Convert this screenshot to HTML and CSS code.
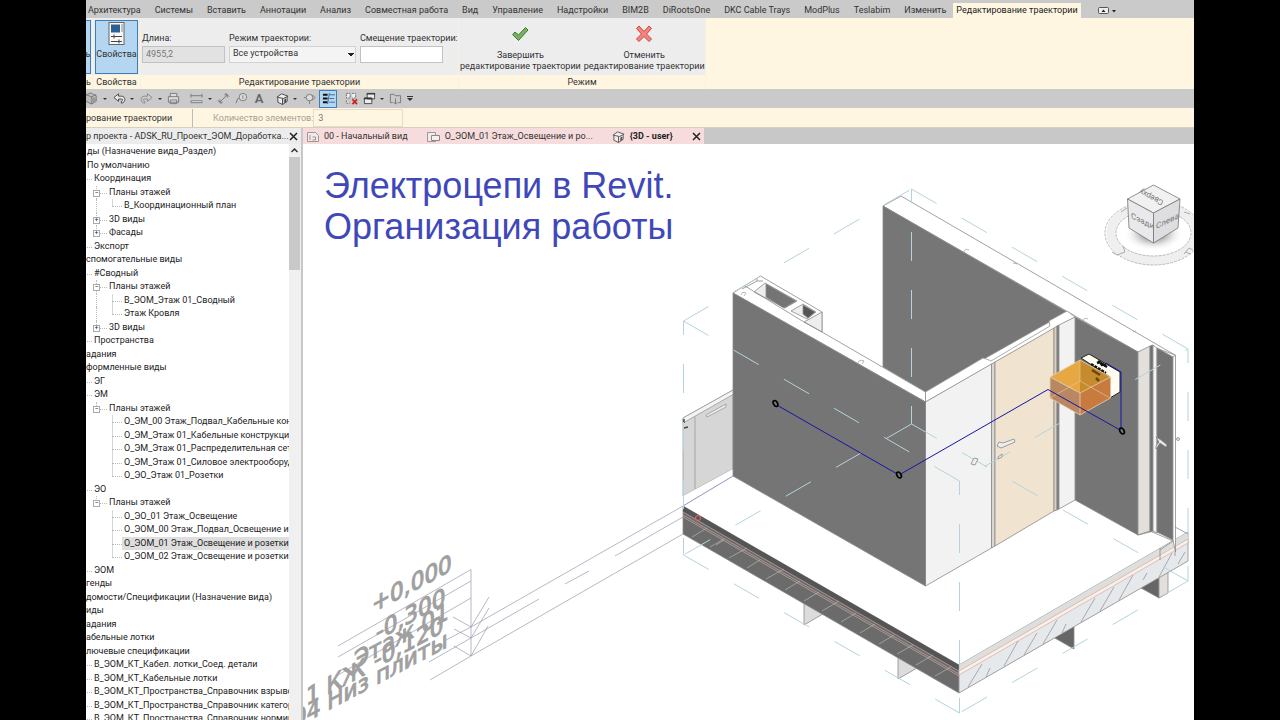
FILE: index.html
```html
<!DOCTYPE html>
<html lang="ru">
<head>
<meta charset="utf-8">
<title>Электроцепи в Revit</title>
<link rel="stylesheet" href="styles.css">
</head>
<body>
<div class="app">
  <nav class="menu">
    <button>Архитектура</button><button>Системы</button><button>Вставить</button><button>Аннотации</button><button>Анализ</button><button>Совместная работа</button><button>Вид</button><button>Управление</button><button>Надстройки</button><button>BIM2B</button><button>DiRootsOne</button><button>DKC Cable Trays</button><button>ModPlus</button><button>Teslabim</button><button>Изменить</button><button class="current">Редактирование траектории</button>
    <button class="collapse" aria-label="Свернуть ленту"><svg width="18" height="8" viewBox="0 0 18 8"><rect x=".5" y=".5" width="10" height="6" rx="1" fill="#eee" stroke="#555"/><path d="M3.500 5l2-2.500 2 2.500zM14 3h4l-2 2.500z" fill="#222"/></svg></button>
  </nav>

  <section class="ribbon">
    <div class="panel cut">
      <div class="panel-body"><button class="big on">ь</button></div>
      <div class="panel-title">ь</div>
    </div>
    <div class="panel props">
      <div class="panel-body">
        <button class="big on">
          <svg width="18" height="24" viewBox="0 0 18 24"><rect x="1" y=".5" width="15" height="22" fill="#f8f8f8" stroke="#666"/><rect x="3" y="2.500" width="9" height="8" fill="#2c5f94"/><path d="M13 3h2M13 5h2M13 7h2M13 9h2" stroke="#888"/><path d="M3 14.500h11M6 12.500v4M3 19.500h11M11 17.500v4" stroke="#444"/></svg>
          <span>Свойства</span>
        </button>
      </div>
      <div class="panel-title">Свойства</div>
    </div>
    <div class="panel path">
      <div class="panel-body fields">
        <div class="field f1"><label for="len">Длина:</label><input id="len" value="4955,2" disabled></div>
        <div class="field f2"><label for="mode">Режим траектории:</label><select id="mode"><option>Все устройства</option></select></div>
        <div class="field f3"><label for="off">Смещение траектории:</label><input id="off"></div>
      </div>
      <div class="panel-title">Редактирование траектории</div>
    </div>
    <div class="panel mode">
      <div class="panel-body actions">
        <button><svg width="18" height="18" viewBox="0 0 18 18"><path d="M1.500 9.500l2.500-2.500 3.500 3 7-7.500 2.500 2.500-9.500 10.500z" fill="#79b15e" stroke="#417a36"/></svg><span>Завершить<br>редактирование траектории</span></button>
        <button><svg width="18" height="18" viewBox="0 0 18 18"><path d="M1.500 3.500l2.500-2.500 5 5.500 5-5.500 2.500 2.500-5 5.500 5 5-2.500 2.500-5-5-5 5-2.500-2.500 5-5z" fill="#f5857c" stroke="#c9453f"/></svg><span>Отменить<br>редактирование траектории</span></button>
      </div>
      <div class="panel-title">Режим</div>
    </div>
  </section>

  <div class="quick">
    <button class="q w14" aria-label="Вид"><svg viewBox="0 0 14 14"><path d="M0 3l5-2 6 3v6l-5 3-6-3M0 3l6 2 5-2M6 5v8" fill="#bbb" stroke="#777"/><circle cx="8" cy="9" r="3" fill="#999"/></svg></button>
    <button class="q w10 car" aria-label="Ещё"></button>
    <button class="q w18" aria-label="Отменить"><svg viewBox="0 0 14 14"><path d="M1 6l5-4v2.500h3c5 0 5 7 0 7.500v-2c2-1 2-2.500 0-2.500H6V10z" fill="#eee" stroke="#444"/></svg></button>
    <button class="q w8 car" aria-label="Ещё"></button>
    <button class="q w20" aria-label="Повторить"><svg viewBox="0 0 14 14"><path d="M13 6L8 2v2.500H5c-5 0-5 7 0 7.500v-2c-2-1-2-2.500 0-2.500h3V10z" fill="#ccc" stroke="#888"/></svg></button>
    <button class="q w8 car" aria-label="Ещё"></button>
    <button class="q w18" aria-label="Печать"><svg viewBox="0 0 14 14"><path d="M3.500 5V1.500h7V5M1.500 5h11v6h-11zM3.500 8.500h7v4h-7z" fill="#ddd" stroke="#777"/></svg></button>
    <i class="sp4"></i>
    <button class="q w20" aria-label="Размер"><svg viewBox="0 0 14 14"><path d="M1 4h12M1 2v4M13 2v4M1 9.500h12v2H1z" fill="#eee" stroke="#777"/></svg></button>
    <button class="q w8 car" aria-label="Ещё"></button>
    <button class="q w18" aria-label="Измерить"><svg viewBox="0 0 14 14"><path d="M3 11L11 3M8 3h3v3M3 8v3h3M1 9l4 4M9 1l4 4" fill="none" stroke="#777"/></svg></button>
    <button class="q w18" aria-label="Марка"><svg viewBox="0 0 14 14"><circle cx="8.500" cy="5.500" r="4" fill="#ddd" stroke="#777"/><path d="M8.500 3.500v4M1 12l2-5h1" fill="none" stroke="#777"/></svg></button>
    <button class="q w18 letter">A</button>
    <i class="sp5"></i>
    <button class="q w18" aria-label="3D вид"><svg viewBox="0 0 14 14"><path d="M1 5.500L6 2l7 2.500L8 7zM2 6v5l5 2.500V7M12 5.500V10l-5 3.500" fill="#eee" stroke="#444"/><path d="M9 8l2-1v4l-2 1z" fill="#444"/></svg></button>
    <button class="q w8 car" aria-label="Ещё"></button>
    <i class="sp2"></i>
    <button class="q w16" aria-label="Разрез"><svg viewBox="0 0 14 14"><circle cx="7" cy="6" r="3.500" fill="#ddd" stroke="#777"/><path d="M3 6H1M7 9.500V13M10 3l3 3-3 3" fill="none" stroke="#777"/></svg></button>
    <i class="sp2"></i>
    <button class="q w18 on" aria-label="Тонкие линии"><svg viewBox="0 0 14 14"><path d="M1 3h5M1 7h5M1 11h5" stroke="#111" stroke-width="2"/><path d="M8 3h6M8 7h5M8 11h6M8 1L6 13" stroke="#356a99"/></svg></button>
    <i class="sp5"></i>
    <button class="q w18" aria-label="Закрыть неактивные"><svg viewBox="0 0 14 14"><path d="M1.500 1.500h4v5h-4zM7.500 1.500h4v5h-4M1.500 9v3h4" fill="#eee" stroke="#666" stroke-dasharray="2 1"/><path d="M8 8l5 5M13 8l-5 5" stroke="#c22" stroke-width="2"/></svg></button>
    <button class="q w18" aria-label="Переключить окна"><svg viewBox="0 0 14 14"><path d="M4.500 1.500h8v6h-8zM1.500 6.500h8v6h-8z" fill="#eee" stroke="#444"/><path d="M1 7h9M4 2h9" stroke="#333" stroke-width="1.500"/></svg></button>
    <button class="q w8 car" aria-label="Ещё"></button>
    <button class="q w18" aria-label="Интерфейс"><svg viewBox="0 0 14 14"><path d="M4 11.500H1.500v-9h4l1 1.500h6v7.500H10M7 7v6M5 11l2 2 2-2" fill="none" stroke="#777"/></svg></button>
    <button class="q w12 car bar" aria-label="Настроить"></button>
  </div>

  <div class="options">
    <span class="ctx">рование траектории</span>
    <label for="cnt">Количество элементов:</label><input id="cnt" value="3" disabled>
  </div>

  <main class="work">
    <aside class="browser">
      <header><h2>р проекта - ADSK_RU_Проект_ЭОМ_Доработка...</h2><button class="x" aria-label="Закрыть"><svg width="9" height="9" viewBox="0 0 9 9"><path d="M1 1l7 7M8 1L1 8" stroke="#222" stroke-width="1.500"/></svg></button></header>
      <div class="browser-body">
        <ul class="tree">
          <li>ды (Назначение вида_Раздел)</li>
          <li>По умолчанию</li>
          <li class="l1">Координация</li>
          <li class="l2 g"><button>−</button>Планы этажей</li>
          <li class="l3 g end">В_Координационный план</li>
          <li class="l2 g"><button>+</button>3D виды</li>
          <li class="l2 g gend"><button>+</button>Фасады</li>
          <li class="l1">Экспорт</li>
          <li class="h">спомогательные виды</li>
          <li class="l1">#Сводный</li>
          <li class="l2 g"><button>−</button>Планы этажей</li>
          <li class="l3 g">В_ЭОМ_Этаж 01_Сводный</li>
          <li class="l3 g end">Этаж Кровля</li>
          <li class="l2 g gend"><button>+</button>3D виды</li>
          <li class="l1">Пространства</li>
          <li class="h">адания</li>
          <li class="h">формленные виды</li>
          <li class="l1">ЭГ</li>
          <li class="l1">ЭМ</li>
          <li class="l2 g gend"><button>−</button>Планы этажей</li>
          <li class="l3">О_ЭМ_00 Этаж_Подвал_Кабельные конс</li>
          <li class="l3">О_ЭМ_Этаж 01_Кабельные конструкци</li>
          <li class="l3">О_ЭМ_Этаж 01_Распределительная сет</li>
          <li class="l3">О_ЭМ_Этаж 01_Силовое электрооборуд</li>
          <li class="l3 end">О_ЭО_Этаж 01_Розетки</li>
          <li class="l1">ЭО</li>
          <li class="l2 g gend"><button>−</button>Планы этажей</li>
          <li class="l3">О_ЭО_01 Этаж_Освещение</li>
          <li class="l3">О_ЭОМ_00 Этаж_Подвал_Освещение и</li>
          <li class="l3"><mark>О_ЭОМ_01 Этаж_Освещение и розетки</mark></li>
          <li class="l3 end">О_ЭОМ_02 Этаж_Освещение и розетки</li>
          <li class="l1">ЭОМ</li>
          <li class="h">генды</li>
          <li class="h">домости/Спецификации (Назначение вида)</li>
          <li class="h">иды</li>
          <li class="h">адания</li>
          <li class="h">абельные лотки</li>
          <li class="h">лючевые спецификации</li>
          <li class="l1">В_ЭОМ_КТ_Кабел. лотки_Соед. детали</li>
          <li class="l1">В_ЭОМ_КТ_Кабельные лотки</li>
          <li class="l1">В_ЭОМ_КТ_Пространства_Справочник взрывос</li>
          <li class="l1">В_ЭОМ_КТ_Пространства_Справочник категори</li>
          <li class="l1">В_ЭОМ_КТ_Пространства_Справочник нормирс</li>
        </ul>
        <div class="scroll"><button aria-label="Вверх"><svg width="7" height="5" viewBox="0 0 7 5"><path d="M.5 4l3-3 3 3" fill="none" stroke="#333" stroke-width="1.500"/></svg></button><div class="thumb"></div></div>
      </div>
    </aside>

    <section class="view">
      <div class="view-tabs">
        <div class="open">
        <button class="t1"><svg width="12" height="12" viewBox="0 0 12 12"><path d="M.5 1.500h8l3 3v6H.5z" fill="#f4e8e8" stroke="#999"/><path d="M3 4v5M5.500 6h3v3h-3" fill="none" stroke="#999"/></svg>00 - Начальный вид</button>
        <button class="t2"><svg width="13" height="12" viewBox="0 0 13 12"><path d="M.5 1.500h8v9h-8z" fill="#f4e8e8" stroke="#999"/><path d="M4.500 4.500h8v5h-8z" fill="#f8eeee" stroke="#888"/></svg>О_ЭОМ_01 Этаж_Освещение и ро...</button>
        <button class="t3"><svg width="13" height="13" viewBox="0 0 14 14"><path d="M1 5.500L6 2l7 2.500L8 7zM2 6v5l5 2.500V7M12 5.500V10l-5 3.500" fill="#eee" stroke="#555"/><path d="M9 8l2-1v4l-2 1z" fill="#555"/></svg>{3D - user}</button>
        <button class="x" aria-label="Закрыть"><svg width="9" height="9" viewBox="0 0 9 9"><path d="M1 1l7 7M8 1L1 8" stroke="#222" stroke-width="1.500"/></svg></button>
        </div>
      </div>
      <div class="canvas">
        <h1>Электроцепи в Revit.<br>Организация работы</h1>
        <svg class="scene" viewBox="303 144 891 576" preserveAspectRatio="xMinYMin slice">
          <defs>
            <radialGradient id="sh"><stop offset=".3" stop-color="#999"/><stop offset="1" stop-color="#fff" stop-opacity="0"/></radialGradient>
          </defs>

          <!-- level marks -->
          <g fill="none" stroke="#9a9aae" stroke-width=".7">
            <path d="M338 646L471 569.500V656M338 657L471 581M338 675L471 598"/>
            <path d="M446 640L471 627 683 506M429 662L471 638 539 599M565 584L589 571M615 556L683 517M430 680L471 656 683 534"/>
            <path d="M453 617L471 627 489 597M454 629L471 638 489 608M454 646L471 656 488 626"/>
          </g>
          <g class="cad">
            <text transform="translate(372 613) skewY(-28)">+0,000</text>
            <text transform="translate(376 641) skewY(-28)">-0,300</text>
            <text transform="translate(354 669) skewY(-28)">Этаж 01</text>
            <text transform="translate(306 706) skewY(-28)">1 КЖ</text>
            <text transform="translate(374 669) skewY(-28)">-0,120</text>
            <text transform="translate(293 729) skewY(-28)">04 Низ плиты</text>
          </g>

          <!-- slab and legs -->
          <g stroke="#8a8a8a" stroke-width=".8">
            <path d="M804 602V625L828 611z" fill="#dcdcdc"/><path d="M898 655V679L917 668z" fill="#dcdcdc"/>
            <path d="M1053 637L1074 626V649z" fill="#666"/><path d="M1141 588L1159 577V598z" fill="#666"/>
            <path d="M1159 577V598L1168 593V572z" fill="#e3dfdb"/>
            <path d="M683 506L733 476 925.500 586 1075 500 1188 532 959 665z" fill="#fff" stroke="none"/>
            <path d="M683 506L959 665V693L683 534z" fill="#6b6b6b"/>
            <path d="M683 506L959 665V671L683 512z" fill="#555" stroke="none"/>
            <path d="M959 665L1188 532V561L959 693z" fill="#e6e9eb"/>
            <path d="M959 665L1188 532V539L959 671z" fill="#dededc" stroke="none"/>
            <path d="M959 671L1188 539V543L959 675z" fill="#fbeee8" stroke="#c7a59a" stroke-width=".6"/>
          </g>
          <path d="M683 512L959 671M683 515L959 674M683 517L959 676" fill="none" stroke="#c9aaa2" stroke-width=".7"/>
          <path d="M692 537l15-9M710 547l14-8M729 558l18-10M747 568l13-8M766 579l18-10M785 590l15-9M804 601l15-9M822 611l17-10M841 622l15-9M860 633l15-9M879 644l15-9M897 654l16-9M916 665l17-10M935 676l16-9M716 545l8-5" stroke="#b5b5b5" stroke-width=".7"/>
          <path d="M968 687l14-23M986 677l4-9M1004 666l14-25M1024 655l13-22M1043 644l14-24M1062 633l4-9M1081 622l14-24M1100 611l14-24M1119 600l14-25M1143 580l4-7M1159 577l13-24M1178 564l7-12" stroke="#8c8c90" stroke-width=".7"/>
          <circle cx="698" cy="518" r="2.500" fill="none" stroke="#e66"/>

          <!-- cabinet -->
          <g stroke="#999" stroke-width=".8">
            <path d="M683 418L733 390V469L683 496z" fill="#d6d6d6"/>
            <path d="M683 418L734 389.500V394L683 423z" fill="#f4f4f4"/>
            <path d="M695 417V489M706 415l20-11v3l-19 10z" fill="#eee"/>
            <path d="M683 496L733 469V476L683 506z" fill="#fff" stroke="none"/>
            <path d="M683 506L733 476" stroke="#7777b0"/>
          </g>
          <path d="M684 419v4M684 428l4-1" stroke="#444" stroke-width="1.500"/>

          <!-- back walls -->
          <g stroke="#8a8a8a" stroke-width=".8">
            <path d="M883 206L901 196 1175 355 1156 348 1138 352z" fill="#fff"/>
            <path d="M883 206L1067 312 925.500 392 883 367z" fill="#767676"/>
            <path d="M1075 317L1138 352V535L1075 500z" fill="#757575"/>
            <path d="M1138 352L1150 346V532L1138 535z" fill="#e3dfdb"/>
            <path d="M1150 346L1153 345V531L1150 532z" fill="#707070"/>
            <path d="M1153 345L1157 348V533L1153 531z" fill="#f4f4f4"/>
            <path d="M1157 348L1173 357V540L1157 532z" fill="#727272"/>
            <path d="M1173 357L1175.500 355V552L1173 540z" fill="#fff"/>
            <path d="M1138 535L1150 531 1173 541 1160 550" fill="none"/>
            <path d="M1160 548v12M1175 527L1188 534M1175 552v4"/>
          </g>
          <path d="M991 361L1050 326 1049 321 1067 311 1075 317 925.500 402V392L983 358 989 360z" fill="#fff" stroke="#999" stroke-width=".8"/>
          <!-- room walls and doors -->
          <g stroke="#8a8a8a" stroke-width=".8">
            <path d="M925.500 402L991.500 364V548L925.500 586z" fill="#f2f2f2"/>
            <path d="M991.500 364L995 362V546L991.500 548z" fill="#d9d7d2"/>
            <path d="M995 362L1054 328V511L995 546z" fill="#f0e3d0"/>
            <path d="M1054 328L1057 326V510L1054 511z" fill="#ddd0bd"/>
            <path d="M1057 326L1059 325V509L1057 510z" fill="#777"/>
            <path d="M1059 325L1075 317V500L1059 509z" fill="#f2f2f2"/>
          </g>
          <!-- front wall -->
          <g stroke="#8a8a8a" stroke-width=".8">
            <path d="M733 293L760.500 276 822 312V332L925.500 392V402z" fill="#fff"/>
            <path d="M804 322L822 312V332z" fill="#eee"/>
            <path d="M754 292L765 283 797 301 785 308z" fill="#eee"/>
            <path d="M766 284L796 301 784 308 766 297z" fill="#747474"/>
            <path d="M791 311L803 304 816 312 807 319z" fill="#eee"/>
            <path d="M803 305L815 312 808 318 803 314z" fill="#555"/>
            <path d="M742 289L757 281 763 281M745 286L804 322L822 332M757 281v-3" fill="none"/>
            <path d="M733 293L925.500 402V586L733 476z" fill="#757575"/>
          </g>
          <g fill="none" stroke="#999" stroke-width=".7"><path d="M741 295q1-4 5-2l-2 3M858 363q1-4 6-2l-2 3M964 252q1-4 5-2M1013 263l4 1M1083 321q1-4 5-2M1133 332l3-1"/></g>

          <!-- section box -->
          <g class="box">
            <path d="M911.500 189L1188 349M683.500 321L911.500 189" />
            <path class="v" d="M911.500 189V424M683.500 321V555M1188 349V581M959.500 481V713"/>
            <path d="M683.500 321L959.500 481L1188 349M683.500 555L959.500 713M1188 581L959.500 713M911.500 424L683.500 555M911.500 424L1188 581"/>
          </g>

          <!-- door handles -->
          <g fill="#eee" stroke="#888" stroke-width=".8"><path d="M997 446l4 2 14-6-1-3-11 4-4-1zM998 457l4-3v3l-4 2zM971 464l3-6 4 1-3 6z"/><path d="M1156 437l5 3 6 5-1 2-6-4-4 6v-3l3-4z"/><circle cx="1178" cy="439" r="1.500"/></g>

          <!-- distribution board -->
          <path d="M1081 358L1089 354 1120 372V392L1110 398V377z" fill="#fffdf0" stroke="#222"/>
          <path d="M1098 361l9 6M1091 364l15 9M1097 363l3-1 2 3 4 0" stroke="#111" stroke-width="2.500" stroke-dasharray="3 1" fill="none"/>
          <path d="M1050 377L1080 360 1110.500 377 1080 393z" fill="#e7a743"/>
          <path d="M1050 377L1080 393V415L1050 398z" fill="#b98762"/>
          <path d="M1080 393L1110.500 377V398L1080 415z" fill="#c77b3e"/>
          <path d="M1080 360L1110.500 377 1080 393z" fill="#c68b2c"/>
          <path d="M1080 360V381L1050 398M1080 381L1110 398" stroke="#e7c48c" stroke-width=".7" fill="none"/>
          <path d="M1050 377L1080 393 1110.500 377M1080 393V415L1050 398V377L1080 360 1110.500 377V398L1080 415" fill="none" stroke="#e9d0b5" stroke-width=".8"/>
          <path d="M1092 370l8 5M1096 378l3 3" stroke="#68470f" stroke-width="2.500"/>

          <!-- circuit path -->
          <path d="M775 404L899 475 1048 389.500 1121 430.500V372L1106 363" fill="none" stroke="#1515a8"/>
          <g fill="#777" stroke="#000" stroke-width="1.600"><ellipse cx="775.500" cy="403.500" rx="2" ry="3.200" transform="rotate(-30 775.500 403.500)"/><ellipse cx="899" cy="475" rx="2" ry="3.200" transform="rotate(-30 899 475)"/><ellipse cx="1122" cy="431" rx="2" ry="3.200" transform="rotate(-30 1122 431)"/></g>

          <!-- view cube -->
          <ellipse cx="1153.500" cy="233" rx="42.500" ry="27.500" fill="none" stroke="#efefef" stroke-width="9"/>
          <g fill="none" stroke="#aaa" stroke-width=".8" stroke-dasharray="3 1"><ellipse cx="1153.500" cy="233" rx="48.500" ry="32"/><ellipse cx="1153.500" cy="233" rx="37.500" ry="23"/></g>
          <path d="M1112 252l5 3 8-3-2-6M1184 254l5-6 4 2M1121 212l6-4M1184 212l6 2M1185 252l6 2" fill="none" stroke="#aaa"/>
          <ellipse cx="1153.500" cy="234" rx="30" ry="17" fill="url(#sh)"/>
          <g stroke="#777" stroke-width=".8"><path d="M1127.500 199L1153.500 185 1180 199 1153.500 213z" fill="#f1f1f2"/><path d="M1127.500 199L1153.500 213V243L1129 228z" fill="#e9e9eb"/><path d="M1153.500 213L1180 199 1178 228 1153.500 243z" fill="#dedee0"/></g>
          <g class="cube"><text transform="translate(1131 218) skewY(26)">Сзади</text><text transform="translate(1156 229) skewY(-26)">Слева</text><text transform="translate(1164 201) rotate(208)">Сверху</text></g>
        </svg>
      </div>
    </section>
  </main>
</div>
</body>
</html>
```
FILE: styles.css
```css
* { box-sizing: border-box; }
body {
  margin: 0;
  padding: 0 86px;
  background: #000;
  color: #333;
  font: 9px/1.5 Roboto, "Noto Sans", sans-serif;
}
button, input, select { font: inherit; color: inherit; }
button { margin: 0; padding: 0; border: 0; background: none; }
svg { display: block; flex: none; }

.app { display: flex; flex-direction: column; height: 100vh; overflow: hidden; background: #fff6e2; }

/* menu tabs */
.menu { display: flex; flex: none; height: 18px; padding-top: 3px; background: #cacaca; white-space: nowrap; overflow: hidden; }
.menu button { padding: 1px 7px 0; }
.menu button:first-child { padding-left: 2px; }
.menu .current { background: #fff6e2; color: #222; padding: 1px 3px 0; }
.menu .collapse { padding: 0 17px; }

/* ribbon */
.ribbon { display: flex; flex: none; height: 71px; white-space: nowrap; }
.panel { display: flex; flex-direction: column; border-right: 1px solid #f8f1e2; }
.panel-body { display: flex; flex: 1; background: #ededed; padding: 2px 0 0; }
.panel-title { height: 14px; text-align: center; line-height: 15px; }
.cut { width: 7px; overflow: hidden; }
.cut .big { width: 5px; border-left: 0; text-align: left; padding-top: 27px; }
.cut .panel-title { text-align: left; }
.props { width: 48px; }
.props .panel-body { padding-left: 2px; }
.big { display: flex; flex-direction: column; align-items: center; gap: 2px; width: 43px; height: 54px; padding-top: 1px; }
.on { background: #b5d6f0; border: 1px solid #3d7fb5; }
.path { width: 318px; }
.fields { gap: 4px; padding: 14px 0 0 1px; }
.field { display: flex; flex-direction: column; }
.field input, .field select { width: 83px; height: 17px; padding: 0 3px; border: 1px solid #c2c2c2; border-radius: 0; background: #fff; }
.field input:disabled { background: #e2e2e2; color: #777; }
.f2 select {
  width: 127px;
  appearance: none;
  background: linear-gradient(45deg, transparent 50%, #222 50%) 118px 6px / 3px 4px no-repeat,
    linear-gradient(-45deg, transparent 50%, #222 50%) 121px 6px / 3px 4px no-repeat, #f4f4f4;
  border-color: #d2d2d2;
}
.mode { width: 247px; }
.actions { gap: 3px; padding-left: 1px; }
.actions button { display: flex; flex-direction: column; align-items: center; gap: 7px; line-height: 11px; padding-top: 5px; }

/* quick access */
.quick { display: flex; flex: none; align-items: center; height: 19px; background: #cacaca; }
.q { display: flex; flex: none; align-items: center; justify-content: center; height: 18px; }
.q svg { width: 13px; height: 13px; }
.w8 { width: 8px; } .w10 { width: 10px; } .w12 { width: 12px; } .w14 { width: 14px; }
.w16 { width: 16px; } .w18 { width: 18px; } .w20 { width: 20px; }
.sp2 { width: 2px; } .sp4 { width: 4px; } .sp5 { width: 5px; }
.w14 { justify-content: flex-start; }
.car::after { content: ""; border: 2px solid transparent; border-top-color: #333; border-bottom: 0; }
.bar::after { border-width: 3px; border-bottom: 0; }
.bar { flex-direction: column; gap: 1px; }
.bar::before { content: ""; width: 6px; height: 1px; background: #333; }
.letter { font-weight: 600; font-size: 13px; color: #666; }

/* options bar */
.options { display: flex; flex: none; align-items: center; height: 20px; border-bottom: 1px solid #d8cfc0; line-height: 18px; }
.ctx { width: 107px; border-right: 1px solid #bbb; white-space: nowrap; }
.options label { margin-left: 20px; color: #a5a096; }
.options input { width: 90px; height: 18px; margin-left: 0; padding: 0 4px; border: 1px solid #e6dccb; background: #fff6e2; color: #777; }

/* project browser */
.work { display: flex; flex: 1; min-height: 0; background: #fff; }
.browser { display: flex; flex-direction: column; width: 217px; flex: none; border-right: 2px solid #c8c8c8; }
.browser header { display: flex; align-items: center; justify-content: space-between; height: 16px; padding: 1px 3px 0 0; background: #ececec; }
.browser h2 { margin: 0; font: inherit; white-space: nowrap; }
.browser-body { display: flex; flex: 1; min-height: 0; }
.tree { flex: 1; min-width: 0; margin: 0; padding: 1px 0 0; list-style: none; overflow: hidden; color: #222; }
.tree li { position: relative; padding-left: 1px; white-space: nowrap; }
.tree .h { padding-left: 0; }
.tree .l1 { padding-left: 8px; }
.tree .l2 { padding-left: 23px; }
.tree .l3 { padding-left: 38px; }
.tree .l1::before { content: ""; position: absolute; left: 1px; top: 7px; width: 5px; border-top: 1px dotted #bbb; }
.tree .l2::before { content: ""; position: absolute; left: 14px; top: 7px; width: 7px; border-top: 1px dotted #bbb; }
.tree .l3::before { content: ""; position: absolute; left: 26px; top: 7px; width: 10px; border-top: 1px dotted #bbb; }
.tree .l3 { background: linear-gradient(#d5d5d5, #d5d5d5) 26px 0 / 1px 100% no-repeat; }
.tree .l3.end { background-size: 1px 7px; }
.tree .g::after { content: ""; position: absolute; left: 10px; top: 0; bottom: 0; border-left: 1px dotted #bbb; }
.tree .gend::after { bottom: 50%; }
.tree li button { position: absolute; z-index: 1; left: 7px; top: 4px; width: 7px; height: 7px; border: 1px solid #aaa; background: #fff; font-size: 7px; line-height: 5px; color: #333; }
.tree mark { display: block; margin: 0 0 0 -2px; padding-left: 2px; background: #dedede; color: inherit; }
.scroll { width: 12px; flex: none; padding-right: 1px; background: #f0f0f0; display: flex; flex-direction: column; }
.scroll button { display: flex; align-items: center; justify-content: center; height: 13px; }
.thumb { height: 113px; background: #c9c9c9; }
.x { display: flex; align-items: center; }

/* views */
.view { display: flex; flex: 1; flex-direction: column; min-width: 0; }
.view-tabs { display: flex; height: 16px; flex: none; background: #c8c8c8; white-space: nowrap; }
.open { display: flex; align-items: center; padding: 1px 3px 0 4px; background: #f6dcdc; }
.view-tabs button { display: flex; align-items: center; gap: 5px; }
.t2 { margin-left: 19px; }
.t3 { margin-left: 19px; font-weight: 700; color: #222; }
.view-tabs .x { margin-left: 19px; }
.canvas { position: relative; flex: 1; min-height: 0; background: #fff; overflow: hidden; }
.canvas h1 { position: absolute; left: 21px; top: 21px; margin: 0; font: 36px/41px "Liberation Sans", Arial, sans-serif; color: #3f48b8; white-space: nowrap; }
.scene { width: 100%; height: 100%; }
.cad text { font: 24px "DejaVu Sans Condensed", "Liberation Sans", sans-serif; fill: #a0a0a0; stroke: #a0a0a0; stroke-width: 1px; }
.cube text { font: 8px Roboto, sans-serif; fill: #777; }
.box path { fill: none; stroke: #b4d3dc; stroke-width: 1; stroke-dasharray: 29 29; }
.box .v { stroke-dashoffset: 15; }
```
